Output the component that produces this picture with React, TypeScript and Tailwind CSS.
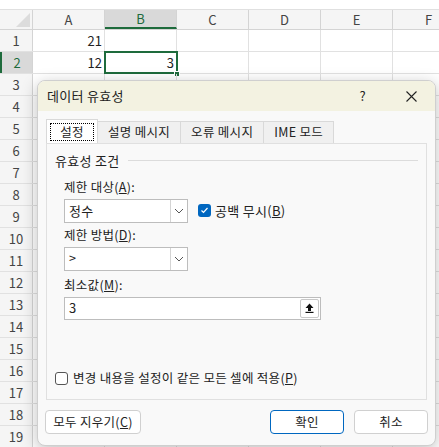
import React from "react";

const cols = ["A", "B", "C", "D", "E", "F"];
const font = { fontFamily: '"Segoe UI", "Noto Sans CJK KR", sans-serif' };

function Chevron() {
  return (
    <svg width="10" height="6" viewBox="0 0 10 6"><path d="M1 1l4 4 4-4" fill="none" stroke="#555" strokeWidth="1" /></svg>
  );
}

export default function App() {
  const rows = Array.from({ length: 19 }, (_, i) => i + 1);
  return (
    <div className="relative w-[439px] h-[447px] overflow-hidden bg-white text-[13px] text-[#222]" style={font}>
      <div className="h-[10px] bg-white border-b border-[#e0e0e0]" />
      <div className="flex h-[20px] bg-[#f5f5f5] border-b border-[#d4d4d4]">
        <div className="w-[33px] shrink-0 border-r border-[#d4d4d4] relative">
          <div className="absolute right-[2px] bottom-[2px] w-0 h-0 border-l-[14px] border-l-transparent border-b-[14px] border-b-[#dcdcdc]" />
        </div>
        {cols.map((c) => (
          <div key={c} className={`w-[72px] shrink-0 flex items-center justify-center border-r border-[#d4d4d4] ${c === "B" ? "bg-[#d9d9d9] text-[#1e6b3c] border-b-2 border-b-[#1e6b3c]" : "text-[#444]"}`}>{c}</div>
        ))}
      </div>
      {rows.map((r) => (
        <div key={r} className="flex h-[22px] border-b border-[#e1e1e1]">
          <div className={`w-[33px] shrink-0 flex items-center justify-center border-r border-[#d4d4d4] ${r === 2 ? "bg-[#d9d9d9] text-[#1e6b3c] border-l-2 border-l-[#1e6b3c]" : "bg-[#f5f5f5] text-[#444]"}`}>{r}</div>
          {cols.map((c) => (
            <div key={c} className={`w-[72px] shrink-0 border-r border-[#e1e1e1] flex items-center justify-end pr-[2px] relative ${r === 2 && c === "B" ? "outline-2 outline-[#1e6b3c] -outline-offset-1" : ""}`}>
              {r === 1 && c === "A" ? "21" : r === 2 && c === "A" ? "12" : r === 2 && c === "B" ? "3" : ""}
              {r === 2 && c === "B" && <div className="absolute right-[-4px] bottom-[-4px] w-[6px] h-[6px] bg-[#1e6b3c] border border-white" />}
            </div>
          ))}
        </div>
      ))}

      <div className="absolute left-[37px] top-[80px] w-[399px] h-[366px] bg-[#f9f9f9] border border-[#cfcfcf] rounded-[8px] overflow-hidden shadow-[0_4px_16px_rgba(0,0,0,0.25)] text-[12.5px] tracking-[0.3px]">
        <div className="h-[30px] bg-[#f3f2e1] flex items-center pl-[9px]">
          <span className="text-[13px]">데이터 유효성</span>
          <span className="ml-auto mr-[40px] text-[13px]">?</span>
          <svg className="mr-[18px]" width="11" height="11" viewBox="0 0 11 11"><path d="M0.5 0.5l10 10M10.5 0.5l-10 10" stroke="#222" strokeWidth="1.1" /></svg>
        </div>
        <div className="flex items-end h-[32px] pl-[8px]">
          <div className="h-[24px] w-[52px] flex items-center justify-center bg-white border border-[#d9d9d9] border-b-0">
            <span className="border border-dotted border-black px-[9px] leading-[16px]">설정</span>
          </div>
          {["설명 메시지", "오류 메시지", "IME 모드"].map((t) => (
            <div key={t} className="h-[22px] px-[10px] flex items-center bg-[#f0f0f0] border border-[#d9d9d9] border-b-0 border-l-0">{t}</div>
          ))}
        </div>
        <div className="mx-[8px] h-[257px] border border-[#e0e0e0] bg-[#f9f9f9] pl-[8px] pr-[8px] relative">
          <div className="flex items-center mt-[7px]">
            <span className="text-[13px]">유효성 조건</span>
            <div className="flex-1 h-px bg-[#dcdcdc] ml-[8px]" />
          </div>
          <div className="pl-[9px]">
            <div className="mt-[8px] leading-[16px]">제한 대상(<u>A</u>):</div>
            <div className="flex items-center mt-[4px]">
              <div className="w-[124px] h-[24px] bg-white border border-[#bdbdbd] flex items-center">
                <span className="flex-1 pl-[4px] text-[13px]">정수</span>
                <div className="w-[17px] h-full border-l border-[#d4d4d4] flex items-center justify-center"><Chevron /></div>
              </div>
              <div className="ml-[10px] w-[13px] h-[13px] rounded-[3px] bg-[#0067c0] flex items-center justify-center">
                <svg width="9" height="9" viewBox="0 0 9 9"><path d="M1.5 4.5l2 2 4-4.5" fill="none" stroke="white" strokeWidth="1.2" /></svg>
              </div>
              <span className="ml-[4px] text-[13px]">공백 무시(<u>B</u>)</span>
            </div>
            <div className="mt-[4px] leading-[16px]">제한 방법(<u>D</u>):</div>
            <div className="mt-[4px] w-[124px] h-[24px] bg-white border border-[#bdbdbd] flex items-center">
              <span className="flex-1 pl-[4px]">&gt;</span>
              <div className="w-[17px] h-full border-l border-[#d4d4d4] flex items-center justify-center"><Chevron /></div>
            </div>
            <div className="mt-[6px] leading-[16px]">최소값(<u>M</u>):</div>
            <div className="mt-[4px] w-[257px] h-[23px] bg-white border border-[#bdbdbd] flex items-center">
              <span className="flex-1 pl-[4px] text-[13px]">3</span>
              <div className="w-[19px] h-[19px] mr-[1px] border border-[#c8c8c8] rounded-[2px] flex items-center justify-center bg-white">
                <svg width="9" height="10" viewBox="0 0 9 10"><path d="M4.5 0.5L0.5 5H3v3h3V5h2.5z" fill="#111" /><rect x="0.5" y="8.8" width="8" height="1.2" fill="#111" /></svg>
              </div>
            </div>
          </div>
          <div className="absolute left-[8px] bottom-[11px] flex items-center">
            <div className="w-[13px] h-[13px] border border-[#555] rounded-[3px] bg-white" />
            <span className="ml-[5px]">변경 내용을 설정이 같은 모든 셀에 적용(<u>P</u>)</span>
          </div>
        </div>
        <div className="flex items-center px-[7px] mt-[10px]">
          <div className="w-[96px] h-[24px] bg-white border border-[#d0d0d0] rounded-[4px] flex items-center justify-center">모두 지우기(<u>C</u>)</div>
          <div className="ml-auto w-[74px] h-[24px] bg-white border border-[#0067c0] rounded-[4px] flex items-center justify-center">확인</div>
          <div className="ml-[10px] w-[74px] h-[24px] bg-white border border-[#d0d0d0] rounded-[4px] flex items-center justify-center">취소</div>
        </div>
      </div>
    </div>
  );
}
